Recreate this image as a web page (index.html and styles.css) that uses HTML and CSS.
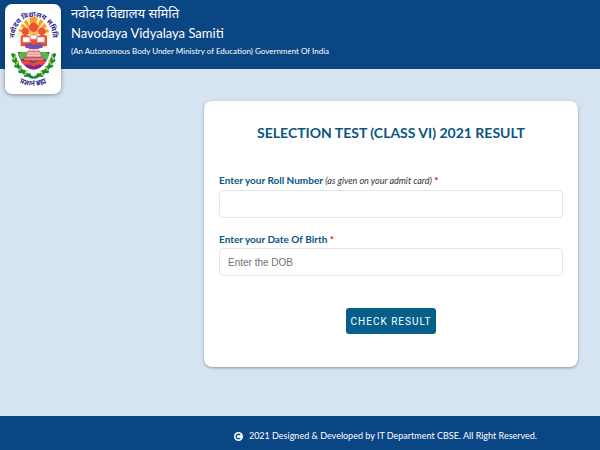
FILE: index.html
```html
<!DOCTYPE html>
<html lang="en">
<head>
  <meta charset="UTF-8" />
  <meta name="viewport" content="width=device-width, initial-scale=1.0" />
  <title>Navodaya Vidyalaya Samiti - Result</title>
  <link rel="stylesheet" href="styles.css">
</head>
<body>
  <header class="site-header">
    <div class="logo">
      <svg viewBox="15 12 168 270" role="img" aria-label="Navodaya Vidyalaya Samiti">
        <defs>
          <path id="arc-top" d="M44 116 C44 28 157 28 158 116" />
          <path id="arc-bottom" d="M54 244 Q98 270 144 244" />
          <clipPath id="shield"><ellipse cx="101" cy="130" rx="51" ry="79" /></clipPath>
        </defs>
        <g clip-path="url(#shield)">
          <rect x="48" y="50" width="106" height="62" fill="#fff1bd" />
          <path d="M100 105 L48 92 L48 82Z M100 105 L50 72 L58 60Z M100 105 L64 55 L76 50Z M100 105 L86 48 L114 48Z M100 105 L124 50 L137 55Z M100 105 L144 60 L152 73Z M100 105 L154 83 L154 95Z" fill="#ff9a24" />
          <rect x="48" y="112" width="106" height="44" fill="#fff" />
          <path d="M48 156 H154 V180 Q134 207 101 210 Q67 207 48 180Z" fill="#7a2792" />
          <path d="M51 162 Q76 148 99 164 Q125 148 151 162 L140 180 Q119 170 101 185 Q81 170 60 180Z" fill="#55b843" />
          <path d="M65 184 Q82 177 100 190 Q119 177 137 183 L128 195 Q112 190 101 200 Q89 190 73 195Z" fill="#ef4a31" />
        </g>
        <!-- pupils and books -->
        <g fill="#e85335">
          <circle cx="101" cy="82" r="14" />
          <circle cx="76" cy="94" r="11" />
          <circle cx="126" cy="94" r="11" />
          <path d="M62 108 Q80 99 90 111 L100 103 L111 111 Q125 99 141 108 V139 H116 V148 H87 V139 H62Z" />
        </g>
        <path d="M68 111 H91 V127 H68Z M111 111 H134 V127 H111Z M90 105 H111 V118 H90Z" fill="#fff" stroke="#e56d60" stroke-width="2" />
        <path d="M76 133 L90 129 L101 135 L114 129 L128 133 V143 L101 148 L76 143Z" fill="#7550a6" />
        <!-- lamp base -->
        <path d="M84 153 H119 L125 173 H77Z M72 174 H130 V181 H72Z" fill="#ef9187" stroke="#b63d60" stroke-width="2" />
        <path d="M81 159 H121 M79 166 H123" stroke="#fff" stroke-width="2" />
        <!-- wreath -->
        <g fill="none" stroke-linecap="round">
          <path d="M43 166 Q51 216 97 232 M159 166 Q151 216 105 232" stroke="#16883d" stroke-width="9" />
          <path d="M38 164 L47 179 M40 181 L52 190 M47 198 L62 202 M59 215 L73 214 M76 227 L88 224 M164 164 L155 179 M162 181 L150 190 M155 198 L140 202 M143 215 L129 214 M126 227 L114 224" stroke="#168b3f" stroke-width="9" />
          <path d="M47 166 L42 178 M55 183 L48 194 M65 200 L59 210 M79 213 L75 225 M155 166 L160 178 M147 183 L154 194 M137 200 L143 210 M123 213 L127 225" stroke="#bbcb2e" stroke-width="5" />
        </g>
        <text class="seal-name"><textPath href="#arc-top" startOffset="50%">नवोदय विद्यालय समिति</textPath></text>
        <text class="seal-motto"><textPath href="#arc-bottom" startOffset="50%">प्रज्ञानं ब्रह्म</textPath></text>
      </svg>
    </div>
    <div class="brand">
      <p class="brand-hindi" lang="hi">नवोदय विद्यालय समिति</p>
      <h1 class="brand-name">Navodaya Vidyalaya Samiti</h1>
      <p class="brand-note">(An Autonomous Body Under Ministry of Education) Government Of India</p>
    </div>
  </header>

  <main class="content">
    <form class="card">
      <h2 class="card-title">SELECTION TEST (CLASS VI) 2021 RESULT</h2>
      <div class="field">
        <label for="roll">Enter your Roll Number <em>(as given on your admit card)</em> <span class="required">*</span></label>
        <input id="roll" type="text" required>
      </div>
      <div class="field">
        <label for="dob">Enter your Date Of Birth <span class="required">*</span></label>
        <input id="dob" type="text" placeholder="Enter the DOB" required>
      </div>
      <button class="submit" type="submit">CHECK RESULT</button>
    </form>
  </main>

  <footer class="site-footer">
    <svg class="copyright" viewBox="0 0 16 16" aria-hidden="true">
      <circle cx="8" cy="8" r="8" fill="#fff" />
      <path d="M11 5.5 A4 4 0 1 0 11 10.5" fill="none" stroke="#0b4684" stroke-width="2.4" />
    </svg>
    <span>2021 Designed &amp; Developed by IT Department CBSE. All Right Reserved.</span>
  </footer>
</body>
</html>
```
FILE: styles.css
```css
*,*::before,*::after{box-sizing:border-box;margin:0;padding:0}

body{
  min-height:100vh;display:flex;flex-direction:column;
  background:#d6e4f2;color:#333;
  font-family:Lato,"Noto Sans",sans-serif;
}

/* Header */
.site-header{
  position:relative;min-height:69px;padding:3px 12px 10px 71px;
  background:#0b4684;color:#fff;
}
.logo{
  position:absolute;top:4px;left:5px;width:56px;height:90px;
  border-radius:7px;background:#fff;box-shadow:0 1px 4px rgba(0,0,0,.4);
}
.logo svg{display:block;width:100%;height:100%}
.seal-name,.seal-motto{
  fill:#302a83;font-family:"Noto Sans",sans-serif;
  font-size:21px;font-weight:700;text-anchor:middle;
}
.brand{display:flex;flex-direction:column}
.brand-hindi{font-size:13px;line-height:20px}
.brand-name{font-size:13px;font-weight:400;line-height:20px}
.brand-note{font-size:8px;line-height:16px}

/* Result form */
.content{flex:1;padding:32px 22px 48px 34%}
.card{
  display:flex;flex-direction:column;
  padding:20px 15px 33px;border-radius:8px;
  background:#fff;box-shadow:0 1px 3px rgba(0,0,0,.35);
}
.card-title{
  margin-bottom:26px;color:#095583;text-align:center;
  font-size:14px;font-weight:700;line-height:24px;
}
.field{display:flex;flex-direction:column;margin-bottom:12px}
.field label{color:#095583;font-size:10px;font-weight:700;line-height:18px}
.field em{color:#333;font-size:9px;font-weight:400}
.required{color:#e00}
.field input{
  width:100%;height:28px;padding:0 8px;
  border:1px solid #e3e5e8;border-radius:4px;background:#fff;
  color:#495057;font-family:"Liberation Sans",sans-serif;font-size:10px;
}
.field input::placeholder{color:#6c757d;opacity:1}
.submit{
  align-self:center;height:26px;margin-top:20px;padding:0 5px;
  border:0;border-radius:3px;background:#055f8a;color:#fff;
  font-family:Roboto,sans-serif;font-size:10px;letter-spacing:1px;
  cursor:pointer;
}

/* Footer */
.site-footer{
  display:flex;align-items:center;justify-content:flex-end;gap:6px;
  min-height:34px;padding:6px 63px 0 12px;
  background:#0b4684;color:#fff;font-size:9px;line-height:16px;
}
.copyright{width:9px;height:9px}
```
